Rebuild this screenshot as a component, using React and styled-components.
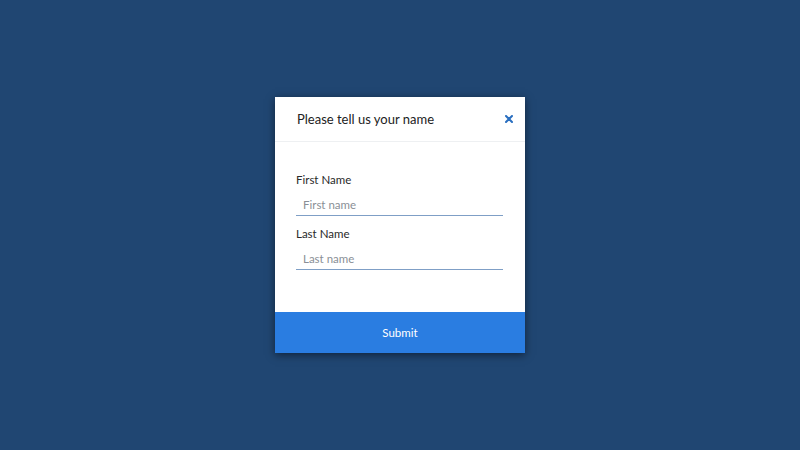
import React from 'react';
import styled, { createGlobalStyle } from 'styled-components';

const GlobalStyle = createGlobalStyle`
  html, body {
    margin: 0;
    height: 100%;
    background: #204672;
    font-family: Lato, "Noto Sans", sans-serif;
  }
  #root {
    height: 100%;
  }
`;

const Page = styled.div`
  height: 450px;
  display: flex;
  justify-content: center;
  align-items: center;
`;

const Modal = styled.div`
  width: 250px;
  background: #fff;
  box-shadow: 0 2px 8px rgba(0, 0, 0, 0.5);
  display: flex;
  flex-direction: column;
`;

const Header = styled.div`
  height: 44px;
  display: flex;
  align-items: center;
  justify-content: space-between;
  padding: 0 10px 0 22px;
  border-bottom: 1px solid #eef0f2;
`;

const Title = styled.h2`
  margin: 0;
  font-size: 13px;
  font-weight: 400;
  color: #222;
`;

const CloseButton = styled.button`
  border: none;
  background: none;
  padding: 0;
  width: 12px;
  height: 12px;
  display: flex;
  align-items: center;
  justify-content: center;
  cursor: pointer;
`;

const Body = styled.form`
  padding: 31px 22px 42px 21px;
  display: flex;
  flex-direction: column;
  gap: 11px;
`;

const Field = styled.label`
  display: flex;
  flex-direction: column;
  gap: 7px;
`;

const Label = styled.span`
  font-size: 11.5px;
  color: #2a2a2a;
  line-height: 14px;
`;

const Input = styled.input`
  height: 21px;
  border: none;
  border-bottom: 1.5px solid #7f9fc6;
  padding: 0 0 0 7px;
  font-family: inherit;
  font-size: 11.5px;
  color: #333;
  outline: none;

  &::placeholder {
    color: #8a8f96;
  }
`;

const Submit = styled.button`
  height: 41px;
  border: none;
  background: #2a7de1;
  color: #fff;
  font-family: inherit;
  font-size: 11.5px;
  cursor: pointer;
`;

const CloseIcon = () => (
  <svg width="8" height="8" viewBox="0 0 8 8">
    <path d="M1 1L7 7M7 1L1 7" stroke="#2a6fc0" strokeWidth="2" strokeLinecap="round" />
  </svg>
);

const App = () => {
  return (
    <>
      <GlobalStyle />
      <Page>
        <Modal>
          <Header>
            <Title>Please tell us your name</Title>
            <CloseButton aria-label="Close">
              <CloseIcon />
            </CloseButton>
          </Header>
          <Body onSubmit={e => e.preventDefault()}>
            <Field>
              <Label>First Name</Label>
              <Input placeholder="First name" />
            </Field>
            <Field>
              <Label>Last Name</Label>
              <Input placeholder="Last name" />
            </Field>
          </Body>
          <Submit>Submit</Submit>
        </Modal>
      </Page>
    </>
  );
};

export default App;
